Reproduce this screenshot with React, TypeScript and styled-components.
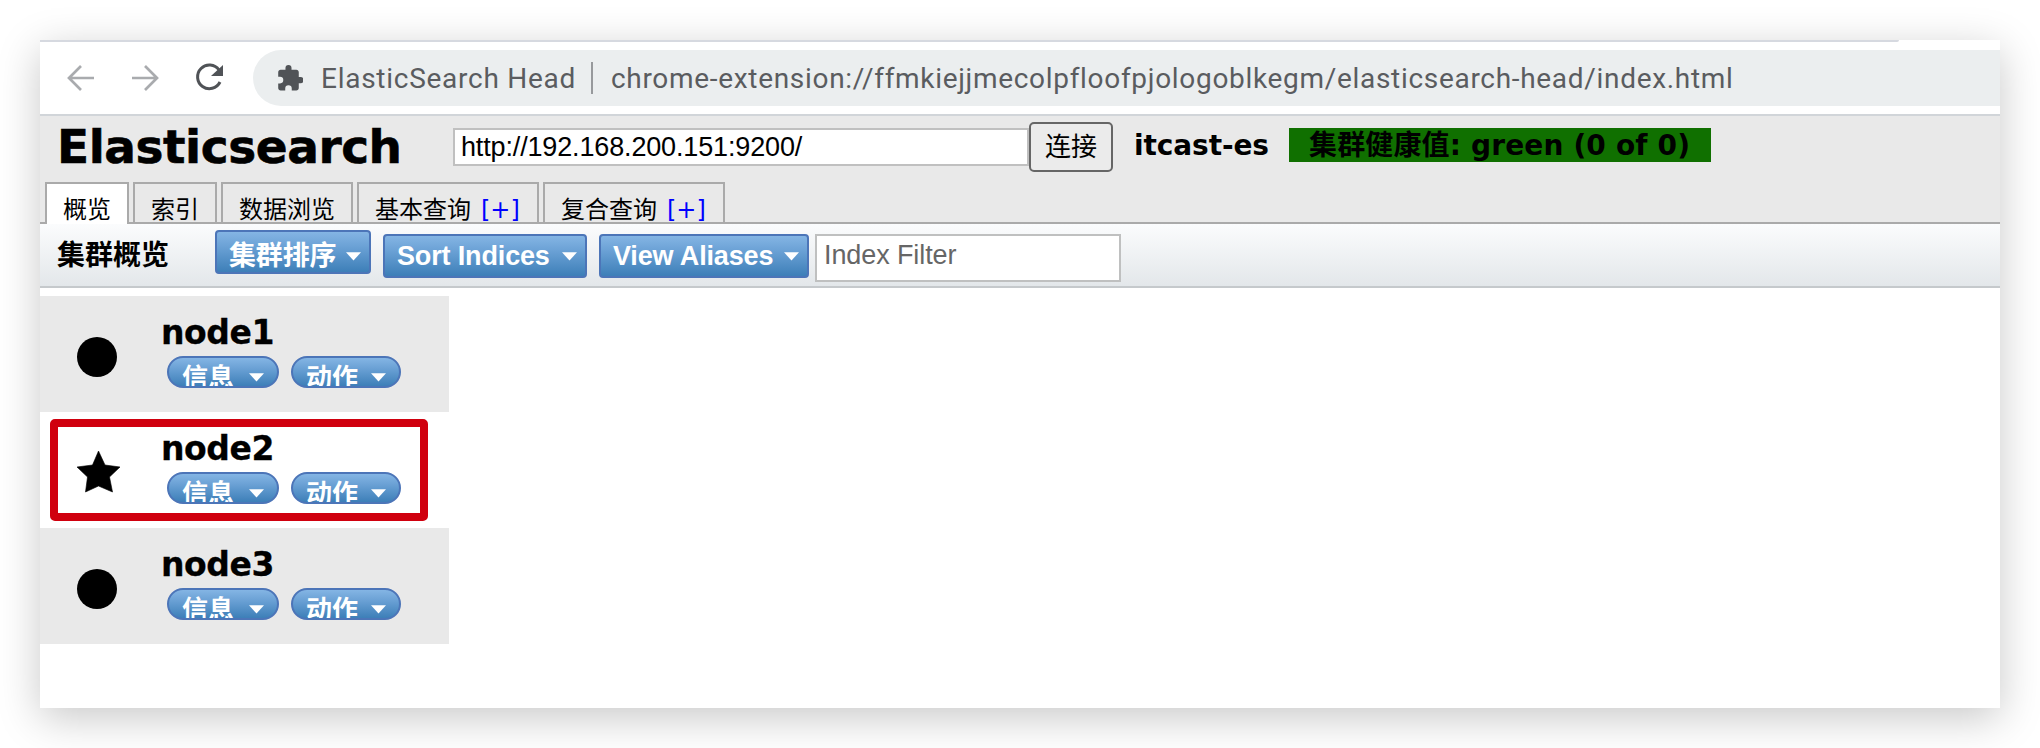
import React from 'react';
import styled, { createGlobalStyle } from 'styled-components';

const Global = createGlobalStyle`
  *, *::before, *::after { box-sizing: border-box; }
  html, body { margin: 0; padding: 0; background: #fff; overflow: hidden; }
`;

const sans = `"Liberation Sans", "Noto Sans CJK SC", sans-serif`;
const verdana = `"DejaVu Sans", "Noto Sans CJK SC", sans-serif`;

const Page = styled.div`
  width: 2040px;
  height: 748px;
  padding: 40px;
  background: #fff;
  overflow: hidden;
`;

const Window = styled.main`
  width: 1960px;
  height: 668px;
  background: #fff;
  box-shadow: 0 10px 40px rgba(0, 0, 0, 0.22);
  display: flex;
  flex-direction: column;
`;

const TopLine = styled.div`
  height: 2px;
  width: 1859px;
  background: #d6d9e0;
  border-bottom-right-radius: 2px;
`;

const BrowserBar = styled.div`
  height: 74px;
  display: flex;
  align-items: center;
  border-bottom: 2px solid #d1d5d9;
  padding-left: 24px;
`;

const NavIcons = styled.div`
  display: flex;
  width: 189px;
  height: 36px;
  svg { display: block; }
`;

const Address = styled.div`
  flex: 1;
  height: 56px;
  background: #ebeeef;
  border-radius: 28px 0 0 28px;
  display: flex;
  align-items: center;
  padding-left: 24px;
  font: 28px Roboto, sans-serif;
  color: #5a5c5f;
  white-space: pre;
`;

const Puzzle = styled.svg`
  width: 26px;
  height: 26px;
  margin-right: 18px;
`;

const Track = styled.span<{ $ls: number }>`
  letter-spacing: ${(p) => p.$ls}px;
`;

const Divider = styled.i`
  width: 2px;
  height: 32px;
  margin: 0 18px 0 15px;
  background: #97999c;
`;

const Header = styled.header`
  height: 108px;
  background: #e9e9e9;
  border-bottom: 2px solid #aaa;
  display: flex;
  flex-direction: column;
  justify-content: space-between;
`;

const Connection = styled.div`
  height: 64px;
  display: flex;
  align-items: flex-start;
  padding: 6px 0 0 17px;
  white-space: pre;
`;

const Title = styled.h1`
  margin: 0;
  width: 396px;
  font: bold 47px/50px ${verdana};
  -webkit-text-stroke: 0.6px #000;
`;

const UrlInput = styled.div`
  width: 576px;
  height: 38px;
  margin-top: 6px;
  border: 2px solid #c0c0c0;
  background: #fff;
  padding-left: 6px;
  font: 27px/35px ${sans};
`;

const ConnectButton = styled.button`
  width: 84px;
  height: 50px;
  padding: 0;
  border: 2px solid #666;
  border-radius: 5px;
  background: #ebebeb;
  color: #000;
  font: 26px/44px ${sans};
`;

const ClusterName = styled.strong`
  width: 176px;
  padding-left: 21px;
  font: bold 28px/48px ${verdana};
`;

const Health = styled.strong`
  width: 422px;
  height: 34px;
  margin-top: 6px;
  padding-left: 20px;
  background: #107000;
  font: bold 28px/36px ${verdana};
`;

const Tabs = styled.nav`
  height: 40px;
  display: flex;
  align-items: flex-start;
  gap: 4px;
  padding-left: 5px;
`;

const Tab = styled.div<{ $w: number; $active?: boolean }>`
  width: ${(p) => p.$w}px;
  height: ${(p) => (p.$active ? 42 : 40)}px;
  flex: none;
  border: 2px solid #aaa;
  border-bottom: 0;
  background: ${(p) => (p.$active ? '#fff' : '#e9e9e9')};
  padding-left: 16px;
  font: 24px/52px ${verdana};
  white-space: pre;
  overflow: hidden;
`;

const Plus = styled.a`
  color: #00f;
  margin-left: 10px;
`;

const Toolbar = styled.div`
  height: 64px;
  display: flex;
  align-items: flex-start;
  padding: 6px 0 0 17px;
  background: linear-gradient(#fbfcfd, #e3e7ea);
  border-bottom: 2px solid #c5c9cc;
`;

const ToolbarTitle = styled.strong`
  width: 158px;
  font: bold 28px/52px ${sans};
`;

const blue = `
  border: 2px solid #4c75b8;
  background: linear-gradient(#84b5e4, #6ca2d6 35%, #3d7fb8);
  color: #fff;
  white-space: pre;
`;

const MenuButton = styled.button<{ $w: number; $gap: number; $raised?: boolean }>`
  ${blue}
  width: ${(p) => p.$w}px;
  height: 44px;
  margin: ${(p) => (p.$raised ? 0 : 4)}px ${(p) => p.$gap}px 0 0;
  padding: ${(p) => (p.$raised ? 7 : 0)}px 8px 0 12px;
  border-radius: 4px;
  display: flex;
  align-items: center;
  justify-content: space-between;
  font: bold 27px/38px ${sans};
  letter-spacing: -0.15px;
  svg { margin-top: ${(p) => (p.$raised ? 1 : 1)}px; }
`;

const Arrow = styled.svg`
  flex: none;
  width: 15px;
  height: 9px;
`;

const FilterInput = styled.div`
  width: 306px;
  height: 48px;
  margin-top: 4px;
  border: 2px solid #bfc0c0;
  background: #fff;
  padding-left: 7px;
  font: 27px/38px ${sans};
  letter-spacing: -0.1px;
  color: #666;
`;

const Nodes = styled.section`
  margin-top: 8px;
  width: 409px;
`;

const NodeRow = styled.div<{ $shaded: boolean }>`
  position: relative;
  height: 116px;
  display: flex;
  background: ${(p) => (p.$shaded ? '#e9e9e9' : '#fff')};
`;

const NodeIcon = styled.svg`
  width: 44px;
  height: 44px;
  margin: 39px 40px 0 37px;
`;

const NodeName = styled.strong`
  display: block;
  height: 60px;
  font: bold 33px/38px ${verdana};
  -webkit-text-stroke: 0.3px #000;
  padding-top: 18px;
`;

const Pills = styled.div`
  display: flex;
  gap: 12px;
  padding-left: 6px;
`;

const Pill = styled.button<{ $w: number }>`
  ${blue}
  width: ${(p) => p.$w}px;
  height: 32px;
  padding: 0 13px;
  border-radius: 16px;
  display: flex;
  justify-content: space-between;
  overflow: hidden;
  font: bold 26px/40px ${sans};
  svg { margin-top: 15px; }
`;

const Highlight = styled.div`
  position: absolute;
  left: 10px;
  top: 7px;
  width: 378px;
  height: 102px;
  border: 8px solid #d0000e;
  border-radius: 5px;
`;

const Caret = () => (
  <Arrow viewBox="0 0 15 9"><path d="M0 0.300H15L7.500 8.500Z" fill="#fff" /></Arrow>
);

const nodes = [
  { name: 'node1', master: false },
  { name: 'node2', master: true },
  { name: 'node3', master: false },
];

export default function App() {
  return (
    <Page>
      <Global />
      <Window>
        <TopLine />
        <BrowserBar>
          <NavIcons>
            <svg width="189" height="36" fill="none" strokeWidth="2.7">
              <path d="M30 18H5M17 6L5 18L17 30" stroke="#a9abae" />
              <path d="M68 18H93M81 6L93 18L81 30" stroke="#a9abae" />
              <path d="M155 10A11.8 11.8 0 1 0 156 22" stroke="#505357" strokeWidth="3" />
              <path d="M159 5V16H147Z" fill="#505357" />
            </svg>
          </NavIcons>
          <Address>
            <Puzzle viewBox="1 1 21.5 21.5"><path fill="#505357" d="M20.5 11H19V7c0-1.1-.9-2-2-2h-4V3.500a2.500 2.500 0 0 0-5 0V5H4c-1.100 0-2 .9-2 2v3.800h1.500a2.700 2.700 0 0 1 0 5.400H2V20c0 1.100.9 2 2 2h3.800v-1.500a2.700 2.700 0 0 1 5.400 0V22H17c1.100 0 2-.9 2-2v-4h1.500a2.500 2.500 0 0 0 0-5Z" /></Puzzle>
            <Track $ls={0.73}>ElasticSearch Head</Track>
            <Divider />
            <Track $ls={0.69}>chrome-extension://ffmkiejjmecolpfloofpjologoblkegm/elasticsearch-head/index.html</Track>
          </Address>
        </BrowserBar>
        <Header>
          <Connection>
            <Title><Track $ls={-0.45}>Elasticsearch</Track></Title>
            <UrlInput><Track $ls={-0.15}>http://192.168.200.151:9200/</Track></UrlInput>
            <ConnectButton>连接</ConnectButton>
            <ClusterName><Track $ls={-0.1}>itcast-es</Track></ClusterName>
            <Health><Track $ls={0.15}>集群健康值: green (0 of 0)</Track></Health>
          </Connection>
          <Tabs>
            <Tab $w={84} $active>概览</Tab>
            <Tab $w={84}>索引</Tab>
            <Tab $w={132}>数据浏览</Tab>
            <Tab $w={182}>基本查询<Plus>[+]</Plus></Tab>
            <Tab $w={182}>复合查询<Plus>[+]</Plus></Tab>
          </Tabs>
        </Header>
        <Toolbar>
          <ToolbarTitle>集群概览</ToolbarTitle>
          <MenuButton $w={156} $gap={12} $raised>集群排序<Caret /></MenuButton>
          <MenuButton $w={204} $gap={12}>Sort Indices<Caret /></MenuButton>
          <MenuButton $w={210} $gap={6}>View Aliases<Caret /></MenuButton>
          <FilterInput>Index Filter</FilterInput>
        </Toolbar>
        <Nodes>
          {nodes.map((n) => (
            <NodeRow key={n.name} $shaded={!n.master}>
              <NodeIcon viewBox="0 0 44 44">
                {n.master
                  ? <path d="M21.500 0L28 14L43 16L32.500 26L35.500 41L21.500 35L8.500 41L10.500 26L0 16L15.500 14Z" stroke="#000" strokeWidth="0.6" strokeLinejoin="round" />
                  : <circle cx="20" cy="22" r="20" />}
              </NodeIcon>
              <div>
                <NodeName><Track $ls={-0.4}>{n.name}</Track></NodeName>
                <Pills>
                  <Pill $w={112}>信息<Caret /></Pill>
                  <Pill $w={110}>动作<Caret /></Pill>
                </Pills>
              </div>
              {n.master && <Highlight />}
            </NodeRow>
          ))}
        </Nodes>
      </Window>
    </Page>
  );
}
